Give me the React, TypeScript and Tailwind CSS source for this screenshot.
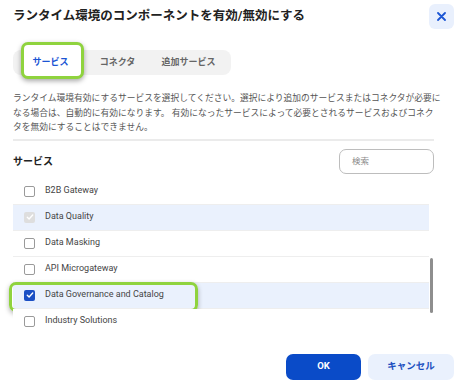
const rows = [
  { label: "B2B Gateway", state: "off" },
  { label: "Data Quality", state: "locked" },
  { label: "Data Masking", state: "off" },
  { label: "API Microgateway", state: "off" },
  { label: "Data Governance and Catalog", state: "on" },
  { label: "Industry Solutions", state: "off" },
]

function Check({ state }: { state: string }) {
  if (state === "off") {
    return <span className="w-[11px] h-[11px] rounded-[2px] border-[1.5px] border-[#9a9a9a] bg-white shrink-0" />
  }
  const bg = state === "on" ? "bg-[#1a4fc4]" : "bg-[#dedede]"
  return (
    <span className={`w-[11px] h-[11px] rounded-[2px] ${bg} shrink-0 flex items-center justify-center`}>
      <svg width="8" height="8" viewBox="0 0 8 8" fill="none">
        <path d="M1.3 4.2 3.1 5.9 6.7 2.1" stroke="white" strokeWidth="1.4" strokeLinecap="round" strokeLinejoin="round" />
      </svg>
    </span>
  )
}

export default function App() {
  return (
    <div
      className="w-[461px] h-[386px] bg-white overflow-hidden pl-[13px] pr-[7px] pt-[4px]"
      style={{ fontFamily: 'Roboto, "Noto Sans CJK JP", sans-serif' }}
    >
      {/* header */}
      <div className="h-[25px] flex items-center justify-between">
        <h1 className="text-[12.5px] font-bold text-[#222]">ランタイム環境のコンポーネントを有効/無効にする</h1>
        <button className="w-[25px] h-[25px] rounded-[6px] bg-[#e9f0fd] flex items-center justify-center">
          <svg width="9" height="9" viewBox="0 0 9 9" fill="none">
            <path d="M1 1 8 8M8 1 1 8" stroke="#1b55d4" strokeWidth="1.8" strokeLinecap="round" />
          </svg>
        </button>
      </div>

      {/* tabs */}
      <div className="mt-[21px] w-[218px] h-[25px] rounded-[8px] bg-[#f2f2f2] flex items-center pl-[9px] text-[9px] font-bold">
        <div className="relative w-[57px] h-[25px] flex items-center justify-center text-[#1b55d4]">
          <div className="absolute left-[-1px] top-[-8px] w-[63px] h-[37px] rounded-[7px] border-[3px] border-[#8fd33e] shadow-[0_2px_5px_rgba(0,0,0,0.35)] bg-white" />
          <span className="relative">サービス</span>
        </div>
        <div className="ml-[10px] w-[57px] text-center text-[#666]">コネクタ</div>
        <div className="ml-[6px] w-[73px] text-center text-[#666]">追加サービス</div>
      </div>

      {/* description */}
      <div className="mt-[16px] text-[8.75px] leading-[14.5px] text-[#555]">
        <div className="whitespace-nowrap">ランタイム環境有効にするサービスを選択してください。選択により追加のサービスまたはコネクタが必要に</div>
        <div className="whitespace-nowrap">なる場合は、自動的に有効になります。 有効になったサービスによって必要とされるサービスおよびコネク</div>
        <div className="whitespace-nowrap">タを無効にすることはできません。</div>
      </div>

      <div className="mt-[4px] w-[421px] h-[2px] bg-[#ebebeb]" />

      {/* section heading + search */}
      <div className="mt-[8px] w-[421px] h-[25px] flex items-center justify-between">
        <h2 className="text-[10px] font-bold text-[#222]">サービス</h2>
        <div className="w-[95px] h-[25px] rounded-[7px] border border-[#bdbdbd] flex items-center pl-[12px] text-[8.5px] text-[#8a8a8a]">
          検索
        </div>
      </div>

      {/* list */}
      <div className="mt-[5px] w-[421px] flex">
        <div className="w-[416px]">
          {rows.map((r) => (
            <div
              key={r.label}
              className={`relative h-[26px] flex items-center gap-[10px] pl-[11px] border-b border-[#eeeeee] ${
                r.state === "off" ? "bg-white" : "bg-[#eaf1fd]"
              } ${r.label === "Industry Solutions" ? "border-transparent" : ""}`}
            >
              {r.state === "on" && (
                <div className="absolute left-[-4px] top-[-1px] w-[189px] h-[30px] rounded-[7px] border-[3px] border-[#8fd33e] shadow-[0_2px_5px_rgba(0,0,0,0.3)]" />
              )}
              <Check state={r.state} />
              <span className="text-[9px] text-[#454545]">{r.label}</span>
            </div>
          ))}
        </div>
        <div className="ml-[1px] w-[3px]">
          <div className="mt-[79px] w-[3px] h-[55px] rounded-full bg-[#8e8e8e]" />
        </div>
      </div>

      {/* footer */}
      <div className="mt-[19px] flex justify-end gap-[7px]">
        <button className="w-[75px] h-[26px] rounded-[7px] bg-[#0a4bc8] text-white text-[9.5px] font-bold">OK</button>
        <button className="w-[86px] h-[26px] rounded-[7px] bg-[#eaf1fd] text-[#1b4fc0] text-[9.5px] font-bold">キャンセル</button>
      </div>
    </div>
  )
}
